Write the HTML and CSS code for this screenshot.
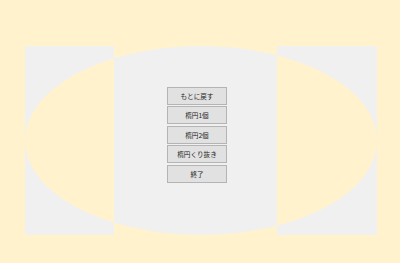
FILE: index.html
```html
<!DOCTYPE html>
<html lang="ja">
<head>
<meta charset="utf-8">
<link rel="stylesheet" href="styles.css">
</head>
<body>
<div class="stage">
  <svg class="canvas" width="400" height="263" viewBox="0 0 400 263">
    <rect x="0" y="0" width="400" height="263" fill="#fff2cc"/>
    <path fill="#f0f0f0" fill-rule="evenodd"
      d="M25 46H114V235H25Z M277 46H377V235H277Z M25 140.5A176 94.5 0 1 0 377 140.5A176 94.5 0 1 0 25 140.5Z"/>
  </svg>
  <div class="menu">
    <button class="btn">もとに戻す</button>
    <button class="btn">楕円1個</button>
    <button class="btn">楕円2個</button>
    <button class="btn">楕円くり抜き</button>
    <button class="btn">終了</button>
  </div>
</div>
</body>
</html>
```
FILE: styles.css
```css
html, body {
  margin: 0;
  padding: 0;
  background: #fff2cc;
}
.stage {
  position: relative;
  width: 400px;
  height: 263px;
  overflow: hidden;
}
.canvas {
  position: absolute;
  left: 0;
  top: 0;
  display: block;
}
.menu {
  position: relative;
  display: flex;
  flex-direction: column;
  gap: 1.5px;
  padding-top: 86.5px;
  padding-left: 167px;
  width: 60px;
}
.btn {
  box-sizing: border-box;
  width: 60px;
  height: 18px;
  margin: 0;
  padding: 0;
  background: #e1e1e1;
  border: 1px solid #b4b4b4;
  border-radius: 0;
  color: #222;
  font-family: "Noto Sans CJK JP", "Noto Sans", sans-serif;
  font-size: 6.6px;
  line-height: 16px;
  text-align: center;
}
```
